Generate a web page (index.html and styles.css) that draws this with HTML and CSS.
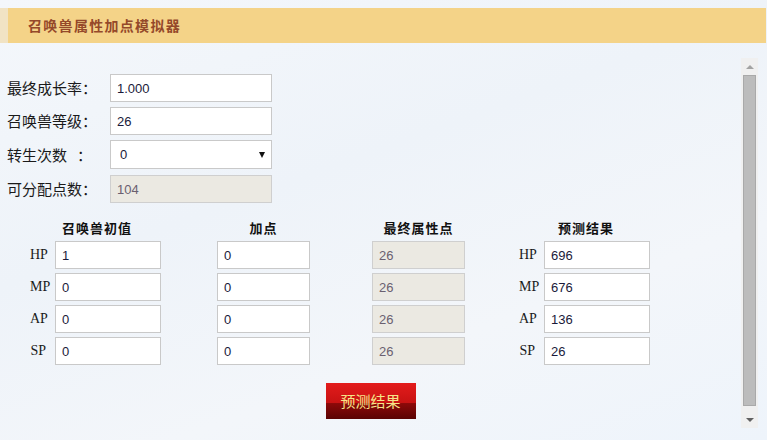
FILE: index.html
```html
<!DOCTYPE html>
<html lang="zh">
<head>
<meta charset="utf-8">
<title>召唤兽属性加点模拟器</title>
<link rel="stylesheet" href="styles.css">
</head>
<body>
<div class="page">
  <div class="titlebar">召唤兽属性加点模拟器</div>
  <div class="pane">
    <div class="content">
      <div class="form">
        <div class="row">
          <label class="lab">最终成长率：</label>
          <input class="field" type="text" value="1.000">
        </div>
        <div class="row">
          <label class="lab">召唤兽等级：</label>
          <input class="field" type="text" value="26">
        </div>
        <div class="row row-sel">
          <label class="lab">转生次数&nbsp;&nbsp;&nbsp;：</label>
          <div class="selwrap">
            <select class="field sel"><option>0</option></select>
          </div>
        </div>
        <div class="row row-dis">
          <label class="lab">可分配点数：</label>
          <input class="field dis" type="text" value="104" disabled>
        </div>
      </div>

      <div class="grid">
        <div class="th th1">召唤兽初值</div>
        <div class="th th2">加点</div>
        <div class="th th3">最终属性点</div>
        <div class="th th4">预测结果</div>

        <div class="k">HP</div><input class="cell" value="1"><span></span><input class="cell" value="0"><span></span><input class="cell dis" value="26" disabled><span></span><div class="k">HP</div><input class="cell" value="696">
        <div class="k">MP</div><input class="cell" value="0"><span></span><input class="cell" value="0"><span></span><input class="cell dis" value="26" disabled><span></span><div class="k">MP</div><input class="cell" value="676">
        <div class="k">AP</div><input class="cell" value="0"><span></span><input class="cell" value="0"><span></span><input class="cell dis" value="26" disabled><span></span><div class="k">AP</div><input class="cell" value="136">
        <div class="k">SP</div><input class="cell" value="0"><span></span><input class="cell" value="0"><span></span><input class="cell dis" value="26" disabled><span></span><div class="k">SP</div><input class="cell" value="26">
      </div>

      <div class="actions">
        <button class="btn" type="button">预测结果</button>
      </div>
    </div>
    <div class="scrollbar">
      <div class="arrow up"></div>
      <div class="thumb"></div>
      <div class="arrow down"></div>
    </div>
  </div>
</div>
</body>
</html>
```
FILE: styles.css
```css
html, body {
  margin: 0;
  padding: 0;
}
body {
  width: 767px;
  height: 440px;
  overflow: hidden;
  background: linear-gradient(160deg, #f4f7fb 0%, #eef3f9 40%, #f3f6fa 70%, #eef4fb 100%);
  font-family: "Noto Sans CJK SC", "Liberation Sans", sans-serif;
  color: #111;
}
.page {
  padding-top: 8px;
}
.titlebar {
  width: 738px;
  height: 35px;
  border-left: 8px solid #f1e3c4;
  background: #f4d388;
  padding-left: 20px;
  font-size: 14px;
  font-weight: bold;
  line-height: 35px;
  letter-spacing: 1.3px;
  color: #95492a;
}
.pane {
  margin-top: 15px;
  width: 758px;
  height: 370px;
  display: flex;
}
.content {
  flex: 1;
  padding-top: 16px;
}
.form {
  padding-left: 7px;
  display: flex;
  flex-direction: column;
}
.row {
  display: flex;
  align-items: center;
  height: 28px;
  margin-bottom: 5px;
}
.row-sel {
  height: 29px;
  margin-bottom: 6px;
}
.row-dis {
  margin-bottom: 0;
}
.lab {
  width: 103px;
  font-size: 15px;
  line-height: 20px;
  color: #1a1a1a;
  white-space: pre;
}
.field {
  box-sizing: border-box;
  width: 162px;
  height: 28px;
  border: 1px solid #c9c9c9;
  background: #fff;
  padding: 0 6px;
  margin: 0;
  font-family: "Liberation Sans", Arial, sans-serif;
  font-size: 13px;
  color: #1a1a3a;
  outline: none;
}
.dis {
  background: #ebe9e2;
  color: #6a6070;
  border-color: #cfcfcf;
}
.selwrap {
  position: relative;
  width: 162px;
  height: 29px;
}
.sel {
  height: 29px;
  width: 162px;
  padding-left: 9px;
  appearance: none;
  -webkit-appearance: none;
  border-radius: 0;
}
.selwrap::after {
  content: "";
  position: absolute;
  left: 149px;
  top: 12px;
  border-left: 3.5px solid transparent;
  border-right: 3.5px solid transparent;
  border-top: 6px solid #111;
  pointer-events: none;
}
.grid {
  margin-top: 16px;
  margin-left: 30px;
  display: grid;
  grid-template-columns: 25px 106px 56px 93px 62px 93px 54px 25px 106px;
  grid-auto-rows: 28px;
  grid-template-rows: 18px;
  row-gap: 4px;
  align-items: center;
}
.th {
  font-size: 13px;
  font-weight: bold;
  letter-spacing: 1px;
  text-align: center;
  line-height: 18px;
  color: #111;
}
.th1 { grid-column: 1 / 3; padding-left: 3px; }
.th2 { grid-column: 4 / 5; }
.th3 { grid-column: 6 / 7; }
.th4 { grid-column: 8 / 10; padding-left: 3px; }
.k {
  text-align: right;
  padding-right: 9px;
  font-family: "Liberation Serif", "DejaVu Serif", serif;
  font-size: 14px;
  color: #1a1a1a;
}
.cell {
  box-sizing: border-box;
  width: 100%;
  height: 28px;
  border: 1px solid #c9c9c9;
  background: #fff;
  padding: 0 6px;
  margin: 0;
  font-family: "Liberation Sans", Arial, sans-serif;
  font-size: 13px;
  color: #1a1a3a;
  outline: none;
}
.cell.dis {
  background: #ebe9e2;
  color: #6a6070;
  border-color: #cfcfcf;
}
.actions {
  display: flex;
  justify-content: center;
  margin-top: 18px;
}
.btn {
  width: 90px;
  height: 36px;
  border: none;
  padding: 0;
  background: linear-gradient(#e31b1b 0%, #c81313 55%, #8c0909 57%, #5a0303 100%);
  color: #f6e488;
  font-family: "Noto Sans CJK SC", sans-serif;
  font-size: 15px;
  line-height: 36px;
}
.scrollbar {
  width: 17px;
  background: #f0f0f0;
  display: flex;
  flex-direction: column;
  align-items: center;
}
.arrow {
  height: 17px;
  width: 17px;
  display: flex;
  align-items: center;
  justify-content: center;
}
.arrow::before {
  content: "";
  border-left: 4px solid transparent;
  border-right: 4px solid transparent;
}
.up::before {
  border-bottom: 4px solid #a3a3a3;
}
.down::before {
  border-top: 4px solid #606060;
}
.thumb {
  box-sizing: border-box;
  width: 13px;
  height: 331px;
  margin-bottom: 5px;
  background: #bcbcbc;
  border: 1px solid #a9a9a9;
}
```
